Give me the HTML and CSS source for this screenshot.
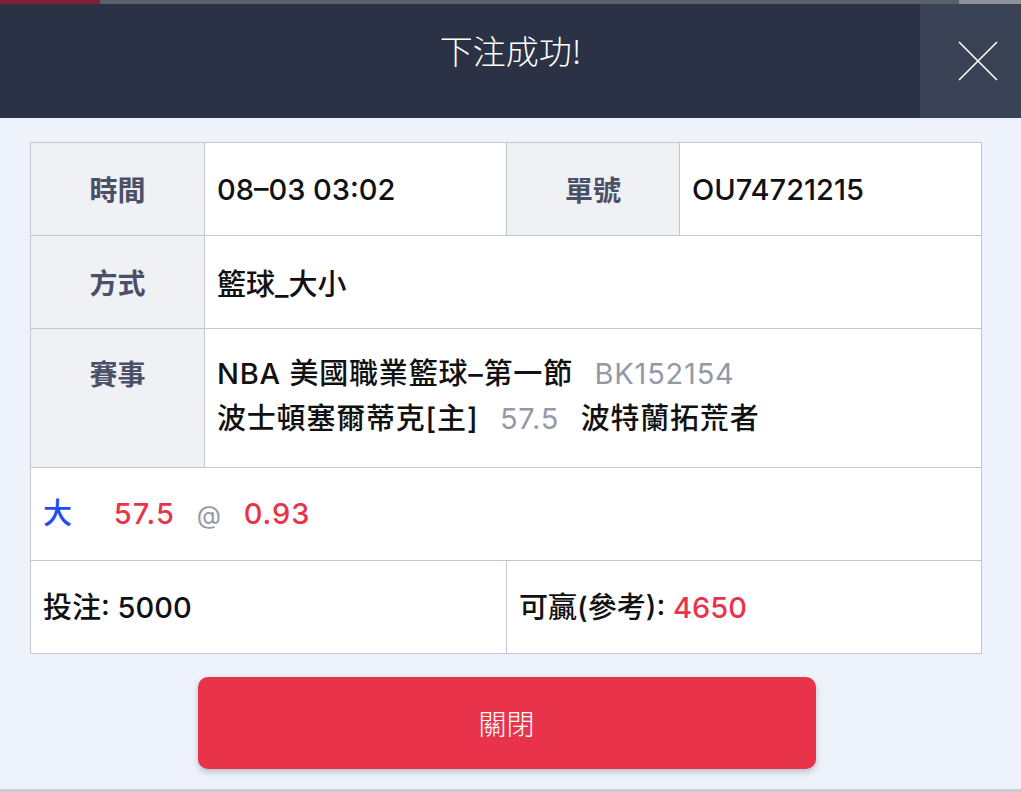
FILE: index.html
```html
<!DOCTYPE html>
<html lang="zh-Hant">

<head>
  <meta charset="UTF-8" />
  <title>下注成功</title>
  <link rel="stylesheet" href="styles.css">
</head>

<body>

  <!-- underlying page edge -->
  <div class="under-strip">
    <span class="under-red"></span>
    <span class="under-right"></span>
  </div>

  <!-- modal header -->
  <div class="modal-head">
    <h1 class="modal-title">下注成功!</h1>
    <button class="modal-close" aria-label="close">
      <svg width="40" height="40" viewBox="0 0 40 40">
        <path d="M1 1 L39 39 M39 1 L1 39" stroke="#fff" stroke-width="1.6" fill="none" />
      </svg>
    </button>
  </div>

  <div class="modal-body">
    <table class="bet-table">
      <colgroup>
        <col class="col-label">
        <col class="col-value">
        <col class="col-label2">
        <col class="col-value">
      </colgroup>
      <tr>
        <th>時間</th>
        <td>08–03 03:02</td>
        <th>單號</th>
        <td>OU74721215</td>
      </tr>
      <tr>
        <th>方式</th>
        <td colspan="3">籃球_大小</td>
      </tr>
      <tr class="row-match">
        <th>賽事</th>
        <td colspan="3">
          <div>NBA 美國職業籃球–第一節 <span class="muted">BK152154</span></div>
          <div>波士頓塞爾蒂克[主] <span class="muted">57.5</span> 波特蘭拓荒者</div>
        </td>
      </tr>
      <tr class="row-pick">
        <td colspan="4" class="pick">
          <span class="blue">大</span>
          <span class="red">57.5</span>
          <span class="muted at">@</span>
          <span class="red">0.93</span>
        </td>
      </tr>
      <tr class="row-sum">
        <td colspan="2">投注: 5000</td>
        <td colspan="2">可贏(參考): <span class="red">4650</span></td>
      </tr>
    </table>

    <div class="actions">
      <button class="btn-close">關閉</button>
    </div>
  </div>

  <div class="under-bottom"></div>

</body>

</html>
```

FILE: styles.css
```css
html,
body {
  margin: 0;
  padding: 0;
}

body {
  width: 1021px;
  height: 792px;
  overflow: hidden;
  background: #eef3fb;
  font-family: Inter, "Noto Sans CJK TC", sans-serif;
  color: #111;
}

.under-strip {
  height: 4px;
  background: #5b5e6b;
  display: flex;
  justify-content: space-between;
}

.under-red {
  width: 100px;
  background: #7d1f35;
}

.under-right {
  width: 62px;
  background: #8d8f99;
}

.modal-head {
  height: 114px;
  background: #2c3245;
  display: flex;
  position: relative;
}

.modal-title {
  flex: 1;
  margin: 0;
  text-align: center;
  color: #fff;
  font-family: "Noto Sans CJK TC", sans-serif;
  font-weight: 300;
  font-size: 33px;
  line-height: 92px;
}

.modal-close {
  position: absolute;
  top: 0;
  right: 0;
  bottom: 0;
  width: 101px;
  border: 0;
  padding: 0 0 0 14px;
  background: #3a4256;
  display: flex;
  align-items: center;
  justify-content: center;
}

.modal-body {
  padding: 24px 40px 0 30px;
}

.bet-table {
  width: 951px;
  border-collapse: collapse;
  table-layout: fixed;
  background: #fff;
  font-size: 29px;
  font-weight: 500;
}

.col-label {
  width: 174px;
}

.col-label2 {
  width: 173px;
}

.col-value {
  width: 302px;
}

.bet-table th,
.bet-table td {
  border: 1px solid #c3c6ce;
  height: 92px;
  padding: 0 12px;
  text-align: left;
}

.bet-table th {
  background: #f0f1f5;
  color: #4a5068;
  text-align: center;
  font-family: "Noto Sans CJK TC", sans-serif;
  font-weight: 700;
  font-size: 28px;
}

.row-match th,
.row-match td {
  height: 116px;
  vertical-align: top;
  padding-top: 22px;
  padding-bottom: 0;
  line-height: 45px;
}

.row-match td {
  letter-spacing: 0.8px;
}

.row-pick td {
  height: 86px;
  padding-bottom: 6px;
}

.row-sum td {
  height: 88px;
  padding-bottom: 4px;
}

.muted {
  color: #9499a8;
  font-weight: 400;
  margin: 0 13px;
}

.pick {
  letter-spacing: 1px;
}

.pick .blue {
  color: #1d4ef5;
  margin-right: 32px;
}

.pick .at {
  margin: 0 14px 0 13px;
  font-size: 25px;
  letter-spacing: 0;
}

.red {
  color: #e8334a;
}

.actions {
  display: flex;
  justify-content: center;
  padding: 23px 0 0 2px;
}

.btn-close {
  width: 618px;
  height: 92px;
  border: 0;
  border-radius: 10px;
  background: #e8334a;
  color: #fff;
  font-family: "Noto Sans CJK TC", sans-serif;
  font-weight: 300;
  font-size: 28px;
  box-shadow: 0 3px 6px rgba(60, 70, 100, 0.3);
}

.under-bottom {
  position: absolute;
  left: 0;
  right: 0;
  top: 789px;
  height: 3px;
  background: #c9ccd3;
}
```
